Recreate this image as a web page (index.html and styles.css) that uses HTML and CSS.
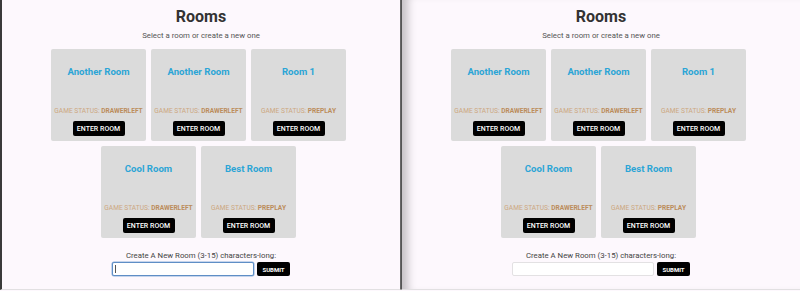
FILE: index.html
```html
<!DOCTYPE html>
<html lang="en">
<head>
    <meta charset="UTF-8">
    <meta name="viewport" content="width=device-width, initial-scale=1.0">
    <title>Rooms</title>
    <link rel="stylesheet" href="styles.css">
</head>
<body>
    <div class="screen">
        <div class="pane pane-left">
            <h1 class="title">Rooms</h1>
            <p class="subtitle">Select a room or create a new one</p>

            <div class="room-list">
                <div class="room-card">
                    <h2 class="room-name">Another Room</h2>
                    <p class="room-status">Game status: <b>drawerleft</b></p>
                    <button class="btn">Enter room</button>
                </div>
                <div class="room-card">
                    <h2 class="room-name">Another Room</h2>
                    <p class="room-status">Game status: <b>drawerleft</b></p>
                    <button class="btn">Enter room</button>
                </div>
                <div class="room-card">
                    <h2 class="room-name">Room 1</h2>
                    <p class="room-status">Game status: <b>preplay</b></p>
                    <button class="btn">Enter room</button>
                </div>
                <div class="room-card">
                    <h2 class="room-name">Cool Room</h2>
                    <p class="room-status">Game status: <b>drawerleft</b></p>
                    <button class="btn">Enter room</button>
                </div>
                <div class="room-card">
                    <h2 class="room-name">Best Room</h2>
                    <p class="room-status">Game status: <b>preplay</b></p>
                    <button class="btn">Enter room</button>
                </div>
            </div>

            <div class="create">
                <label class="create-label" for="roomNameA">Create A New Room (3-15) characters-long:</label>
                <div class="create-row">
                    <div class="input-wrap">
                        <input type="text" id="roomNameA" class="room-input focused">
                        <span class="caret"></span>
                    </div>
                    <button class="btn btn-submit">Submit</button>
                </div>
            </div>
        </div>

        <div class="pane pane-right">
            <h1 class="title">Rooms</h1>
            <p class="subtitle">Select a room or create a new one</p>

            <div class="room-list">
                <div class="room-card">
                    <h2 class="room-name">Another Room</h2>
                    <p class="room-status">Game status: <b>drawerleft</b></p>
                    <button class="btn">Enter room</button>
                </div>
                <div class="room-card">
                    <h2 class="room-name">Another Room</h2>
                    <p class="room-status">Game status: <b>drawerleft</b></p>
                    <button class="btn">Enter room</button>
                </div>
                <div class="room-card">
                    <h2 class="room-name">Room 1</h2>
                    <p class="room-status">Game status: <b>preplay</b></p>
                    <button class="btn">Enter room</button>
                </div>
                <div class="room-card">
                    <h2 class="room-name">Cool Room</h2>
                    <p class="room-status">Game status: <b>drawerleft</b></p>
                    <button class="btn">Enter room</button>
                </div>
                <div class="room-card">
                    <h2 class="room-name">Best Room</h2>
                    <p class="room-status">Game status: <b>preplay</b></p>
                    <button class="btn">Enter room</button>
                </div>
            </div>

            <div class="create">
                <label class="create-label" for="roomNameB">Create A New Room (3-15) characters-long:</label>
                <div class="create-row">
                    <div class="input-wrap">
                        <input type="text" id="roomNameB" class="room-input">
                    </div>
                    <button class="btn btn-submit">Submit</button>
                </div>
            </div>
        </div>
    </div>
</body>
</html>
```

FILE: styles.css
```css
html, body {
    margin: 0;
    padding: 0;
    background: #fdf8fd;
}
body {
    font-family: Roboto, "Liberation Sans", Arial, sans-serif;
    color: #333;
}
.screen {
    display: flex;
    height: 291px;
}
.pane {
    flex: 1;
    height: 290px;
    box-sizing: border-box;
    border-bottom: 1px solid #e2e0e2;
    display: flex;
    flex-direction: column;
    align-items: center;
}
.pane-left {
    border-left: 2px solid #3a3a3a;
    border-right: 1px solid #666;
}
.pane-right {
    border-left: 1px solid #555;
    box-shadow: inset 12px 0 8px -6px rgba(0, 0, 0, 0.22);
}
.title {
    margin: 7px 0 0;
    font-size: 16px;
    line-height: 20px;
    font-weight: 700;
    color: #333;
}
.subtitle {
    margin: 4px 0 0;
    font-size: 7.8px;
    line-height: 10px;
    color: #555;
}
.room-list {
    margin: 8px 5px 0 0;
    width: 300px;
    display: flex;
    flex-wrap: wrap;
    justify-content: center;
    gap: 5px 5px;
}
.room-card {
    width: 95px;
    height: 92px;
    box-sizing: border-box;
    padding: 17px 3px 5px;
    background: #dbdbdb;
    border-radius: 2px;
    display: flex;
    flex-direction: column;
    align-items: center;
}
.room-name {
    margin: 0;
    font-size: 9.6px;
    line-height: 12px;
    font-weight: 700;
    color: #2ba5d6;
}
.room-status {
    margin: auto 0 6px;
    font-size: 6.6px;
    line-height: 8px;
    text-transform: uppercase;
    color: #cda77f;
    white-space: nowrap;
}
.room-status b {
    color: #bb8d5c;
}
.btn {
    height: 15px;
    flex-shrink: 0;
    padding: 0 6px;
    border: none;
    border-radius: 2px;
    background: #000;
    color: #fff;
    font-family: Roboto, "Liberation Sans", Arial, sans-serif;
    font-size: 7px;
    font-weight: 500;
    text-transform: uppercase;
    cursor: pointer;
}
.room-card .btn {
    width: 52px;
    padding: 0;
}
.create {
    margin-top: 13px;
    display: flex;
    flex-direction: column;
    align-items: center;
}
.create-label {
    font-size: 7.8px;
    line-height: 10px;
    color: #444;
}
.create-row {
    margin-top: 1px;
    display: flex;
    gap: 3px;
}
.input-wrap {
    position: relative;
}
.room-input {
    display: block;
    width: 142px;
    height: 14px;
    box-sizing: border-box;
    border: 1px solid #e3e1e3;
    border-radius: 2px;
    background: #fff;
    padding: 0 3px;
    outline: none;
}
.room-input.focused {
    border-color: #5f8ec6;
    box-shadow: 0 0 0 0.5px #8fb1db;
}
.caret {
    position: absolute;
    left: 3px;
    top: 3px;
    width: 1px;
    height: 8px;
    background: #555;
}
.btn-submit {
    width: 33px;
    height: 14px;
    padding: 0;
    font-weight: 700;
    font-size: 6px;
}
```
